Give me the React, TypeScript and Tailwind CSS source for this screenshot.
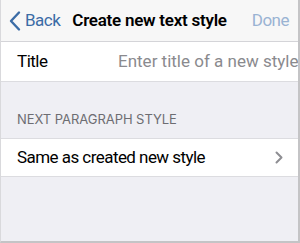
import React from "react";

const body = { fontFamily: "Roboto, 'Liberation Sans', sans-serif" };

export default function App() {
  return (
    <div
      className="w-[300px] h-[243px] overflow-hidden bg-[#efeff4] flex flex-col border-l border-l-[#d9d9dc] border-r-2 border-r-[#c4c4c6] border-b-2 border-b-[#c4c4c6]"
      style={{ fontFamily: "Inter, 'Liberation Sans', sans-serif" }}
    >
      <div className="h-[42px] shrink-0 bg-[#f7f7f7] border-b border-[#d4d4d8] grid grid-cols-[1fr_auto_1fr] items-center" style={body}>
        <div className="flex items-center pl-[8px] text-[#3b6ca6]">
          <svg width="12" height="22" viewBox="0 0 12 22" className="mr-[4px]">
            <path d="M10 2.5 L2 11 L10 19.5" fill="none" stroke="#3b6ca6" strokeWidth="2.4" strokeLinecap="round" strokeLinejoin="round" />
          </svg>
          <span className="text-[17px] tracking-[-0.5px]">Back</span>
        </div>
        <div className="text-[17px] font-semibold text-black whitespace-nowrap tracking-[-0.25px]">Create new text style</div>
        <div className="justify-self-end pr-[9px] text-[17px] text-[#9ab3d3] tracking-[-0.5px]">Done</div>
      </div>
      <div className="h-[40px] shrink-0 bg-white border-b border-[#dcdce0] flex items-center pl-[16px] whitespace-nowrap overflow-hidden" style={body}>
        <span className="text-[17px] text-black w-[101px] shrink-0 tracking-[-0.5px]">Title</span>
        <span className="text-[17px] text-[#8a8a8e]">Enter title of a new style</span>
      </div>
      <div className="h-[56px] shrink-0 flex items-end pl-[16px] pb-[9px]">
        <span className="text-[13px] text-[#6d6d72] tracking-[-0.05px]">NEXT PARAGRAPH STYLE</span>
      </div>
      <div className="h-[39px] shrink-0 bg-white border-t border-b border-[#dcdce0] flex items-center pl-[16px] pr-[15px]" style={body}>
        <span className="text-[17px] text-black tracking-[-0.55px]">Same as created new style</span>
        <svg width="8" height="13" viewBox="0 0 8 13" className="ml-auto">
          <path d="M1.5 1.5 L6.5 6.5 L1.5 11.5" fill="none" stroke="#8e8e93" strokeWidth="2" strokeLinecap="round" strokeLinejoin="round" />
        </svg>
      </div>
    </div>
  );
}
